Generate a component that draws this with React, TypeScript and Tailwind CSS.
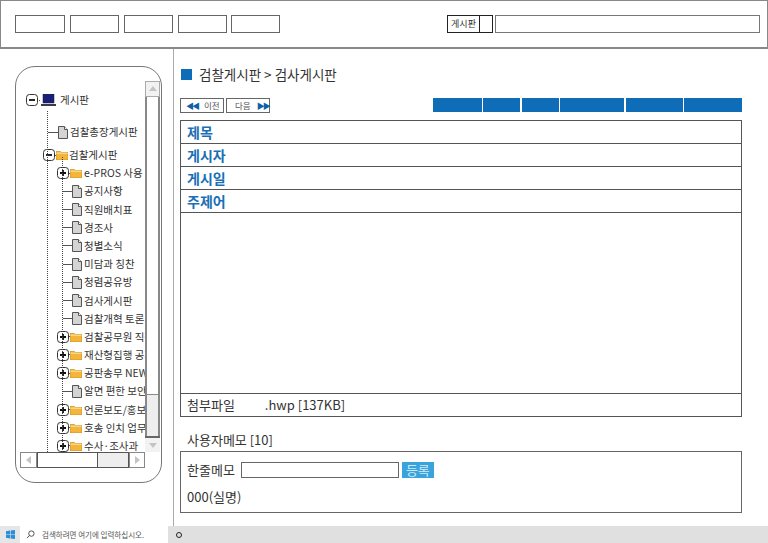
import React from "react";

const Expander = ({ open }: { open?: boolean }) => (
  <svg width="12" height="12" viewBox="0 0 12 12" className="shrink-0">
    <rect x="0.5" y="0.5" width="11" height="11" rx="3" fill="#fff" stroke="#333" />
    <path d={open ? "M3 6h6" : "M3 6h6M6 3v6"} stroke="#111" strokeWidth="1.8" />
  </svg>
);

const Doc = () => (
  <svg width="10" height="13" viewBox="0 0 10 13" className="shrink-0">
    <path d="M.5.5h6l3 3v9h-9z" fill="#d4d4d4" stroke="#555" />
    <path d="M6.5.5v3h3" fill="#fff" stroke="#555" />
  </svg>
);

const Folder = () => (
  <svg width="12" height="10" viewBox="0 0 12 10" className="shrink-0">
    <path d="M0 1.5h4.5l1 1H12V10H0z" fill="#f5b53a" stroke="#b9851c" strokeWidth=".6" />
    <path d="M.5 3.2h11" stroke="#fde6a8" />
  </svg>
);

const Laptop = () => (
  <svg width="15" height="12" viewBox="0 0 15 12" className="shrink-0">
    <rect x="2" y="0" width="11" height="9" fill="#1a1f7c" stroke="#222" strokeWidth=".5" />
    <path d="M0 10h15v2H0z" fill="#3a3a4a" />
  </svg>
);

const Arrow = ({ dir }: { dir: "up" | "down" | "left" | "right" }) => {
  const d = { up: "M1 7l4-5 4 5z", down: "M1 3l4 5 4-5z", left: "M7 1L2 5l5 4z", right: "M3 1l5 4-5 4z" }[dir];
  return (
    <svg width="10" height="10" viewBox="0 0 10 10">
      <path d={d} fill="#c4c4c4" />
    </svg>
  );
};

const Dash = ({ w }: { w: string }) => <span className={`h-px bg-[#555] shrink-0 ${w}`} />;

type Node = { label: string; kind: "doc" | "folder" };

const children: Node[] = [
  { label: "e-PROS 사용", kind: "folder" },
  { label: "공지사항", kind: "doc" },
  { label: "직원배치표", kind: "doc" },
  { label: "경조사", kind: "doc" },
  { label: "청별소식", kind: "doc" },
  { label: "미담과 칭찬", kind: "doc" },
  { label: "청렴공유방", kind: "doc" },
  { label: "검사게시판", kind: "doc" },
  { label: "검찰개혁 토론", kind: "doc" },
  { label: "검찰공무원 직장협의회", kind: "folder" },
  { label: "재산형집행 공지사항", kind: "folder" },
  { label: "공판송무 NEWS", kind: "folder" },
  { label: "알면 편한 보안 상식", kind: "doc" },
  { label: "언론보도/홍보자료", kind: "folder" },
  { label: "호송 인치 업무 안내", kind: "folder" },
  { label: "수사·조사과", kind: "folder" },
];

function Tree() {
  return (
    <div className="relative flex-1 min-w-0 overflow-hidden pt-[13px] text-[10.5px] text-[#333]">
      <span className="absolute left-[27px] top-[30px] bottom-0 border-l border-dotted border-[#444]" />
      <span className="absolute left-[42px] top-[76px] bottom-0 border-l border-dotted border-[#444]" />
      <div className="flex items-center h-[12px] pl-[6px] gap-[1px] whitespace-nowrap">
        <Expander open />
        <Dash w="w-[1px]" />
        <Laptop />
        <span className="ml-[3px]">게시판</span>
      </div>
      <div className="flex items-center h-[18px] mt-[17px] pl-[28px] whitespace-nowrap">
        <Dash w="w-[10px]" />
        <Doc />
        <span className="ml-[2px]">검찰총장게시판</span>
      </div>
      <div className="flex items-center h-[18px] mt-[5px] pl-[23px] whitespace-nowrap">
        <Expander open />
        <Dash w="w-[1px]" />
        <Folder />
        <span className="ml-[1px]">검찰게시판</span>
      </div>
      {children.map((n) => (
        <div key={n.label} className="flex items-center h-[18.2px] whitespace-nowrap pl-[37px]">
          {n.kind === "folder" ? (
            <>
              <Expander />
              <Dash w="w-[1px]" />
              <Folder />
              <span className="ml-[2px]">{n.label}</span>
            </>
          ) : (
            <>
              <Dash w="w-[9px] ml-[6px]" />
              <Doc />
              <span className="ml-[2px]">{n.label}</span>
            </>
          )}
        </div>
      ))}
    </div>
  );
}

function TreePanel() {
  return (
    <div className="ml-[15px] mt-[17px] w-[147px] h-[417px] rounded-[20px] border border-[#777] pt-[14px] pl-[4px] pr-[1px] pb-[14px] flex flex-col">
      <div className="flex flex-1 min-h-0">
        <Tree />
        <div className="w-[15px] shrink-0 border-x-2 border-[#888] flex flex-col">
          <div className="h-[16px] -mx-[2px] border border-[#aaa] bg-[#f2f2f2] flex items-center justify-center">
            <Arrow dir="up" />
          </div>
          <div className="flex-1 bg-white" />
          <div className="h-[42px] border-t border-[#888] bg-[#eeeeee]" />
          <div className="h-[16px] -mx-[2px] border-t-2 border-[#666] bg-[#f2f2f2] flex items-center justify-center">
            <Arrow dir="down" />
          </div>
        </div>
      </div>
      <div className="h-[16px] shrink-0 flex">
        <div className="w-[17px] border border-[#888] flex items-center justify-center">
          <Arrow dir="left" />
        </div>
        <div className="w-[92px] border border-[#555] flex">
          <div className="flex-1 border-r border-[#555]" />
          <div className="w-[30px] bg-[#eeeeee]" />
        </div>
        <div className="w-[16px] border border-[#888] flex items-center justify-center">
          <Arrow dir="right" />
        </div>
      </div>
    </div>
  );
}

const TableRow = ({ label }: { label: string }) => (
  <div className="h-[23px] border-b border-[#555] pl-[6px] flex items-center font-bold text-[14px] text-[#1a6fb5]">{label}</div>
);

const tabs = ["w-[49px]", "w-[37px]", "w-[37px]", "w-[64px]", "w-[57px]", "w-[58px]"];

export default function App() {
  return (
    <div className="h-[543px] w-[768px] overflow-hidden bg-white flex flex-col text-[#333] font-['Noto_Sans_CJK_KR','Noto_Sans',sans-serif]">
      <header className="h-[49px] shrink-0 border border-[#888] border-b-2 flex items-center pl-[14px] pr-[7px]">
        <div className="flex">
          <div className="w-[50px] h-[18px] border border-[#666] mr-[5px]" />
          <div className="w-[49px] h-[18px] border border-[#666] mr-[5px]" />
          <div className="w-[49px] h-[18px] border border-[#666] mr-[5px]" />
          <div className="w-[49px] h-[18px] border border-[#666] mr-[4px]" />
          <div className="w-[49px] h-[18px] border border-[#666]" />
        </div>
        <div className="ml-auto flex">
          <div className="w-[32px] h-[18px] border border-[#222] border-r-0 flex items-center justify-center text-[9px] text-[#333]">게시판</div>
          <div className="w-[14px] h-[18px] border border-[#222]" />
          <div className="w-[265px] h-[18px] border border-[#777] ml-[2px]" />
        </div>
      </header>
      <div className="flex flex-1 min-h-0">
        <aside className="w-[174px] shrink-0 border-r border-[#aaa]">
          <TreePanel />
        </aside>
        <main className="flex-1 min-w-0 pl-[6px] pr-[26px]">
          <div className="flex items-center mt-[15px] h-[20px] ml-[1px]">
            <span className="w-[11px] h-[11px] bg-[#0f6db8]" />
            <span className="ml-[7px] text-[13.5px] text-[#333]">검찰게시판 &gt; 검사게시판</span>
          </div>
          <div className="flex mt-[14px] h-[15px]">
            <div className="w-[44px] border border-[#666] flex items-center pl-[5px] text-[8.5px] text-[#555]">
              <span className="text-[#0f5fa8] text-[8px] tracking-[-2px] mr-[6px]">◀◀</span>이전
            </div>
            <div className="w-[44px] ml-[2px] border border-[#666] flex items-center pl-[8px] text-[8.5px] text-[#555]">
              다음<span className="text-[#0f5fa8] text-[8px] tracking-[-2px] ml-[6px]">▶▶</span>
            </div>
            <div className="ml-auto flex gap-[1.5px]">
              {tabs.map((w, i) => (
                <div key={i} className={`${w} h-[14px] bg-[#0f6db8]`} />
              ))}
            </div>
          </div>
          <div className="mt-[7px] border border-[#555] border-b-[#555] flex flex-col">
            <TableRow label="제목" />
            <TableRow label="게시자" />
            <TableRow label="게시일" />
            <TableRow label="주제어" />
            <div className="h-[181px] border-b border-[#555]" />
            <div className="h-[22px] pl-[6px] flex items-center text-[13px]">
              <span>첨부파일</span>
              <span className="ml-[30px]">.hwp [137KB]</span>
            </div>
          </div>
          <div className="mt-[13px] pl-[7px] text-[13px] leading-[20px]">사용자메모 [10]</div>
          <div className="mt-[1px] h-[62px] border border-[#666] pl-[6px] pt-[9px] text-[13px]">
            <div className="flex items-center h-[17px]">
              <span>한줄메모</span>
              <div className="ml-[6px] w-[158px] h-[16px] border border-[#666]" />
              <div className="ml-[3px] w-[32px] h-[16px] bg-[#38a3dc] text-[#cfeaf7] flex items-center justify-center">등록</div>
            </div>
            <div className="mt-[10px] leading-[18px]">000(실명)</div>
          </div>
        </main>
      </div>
      <footer className="h-[17px] shrink-0 bg-[#e0e0e0] flex items-center">
        <div className="w-[20px] h-full bg-[#e6e6e6] flex items-center justify-center">
          <svg width="9" height="9" viewBox="0 0 9 9">
            <path d="M0 1.2l4-.6v3.6H0zM4.6.5L9 0v4.2H4.6zM0 4.8h4v3.6l-4-.6zM4.6 4.8H9V9l-4.4-.5z" fill="#2a8fd8" />
          </svg>
        </div>
        <div className="w-[148px] h-full bg-white flex items-center pl-[6px]">
          <svg width="9" height="9" viewBox="0 0 10 10" fill="none" stroke="#444">
            <circle cx="6" cy="4" r="3" />
            <path d="M4 6L1 9" />
          </svg>
          <span className="ml-[7px] text-[7.5px] text-[#555]">검색하려면 여기에 입력하십시오.</span>
        </div>
        <span className="ml-[8px] w-[6px] h-[6px] rounded-full border border-[#222]" />
      </footer>
    </div>
  );
}
